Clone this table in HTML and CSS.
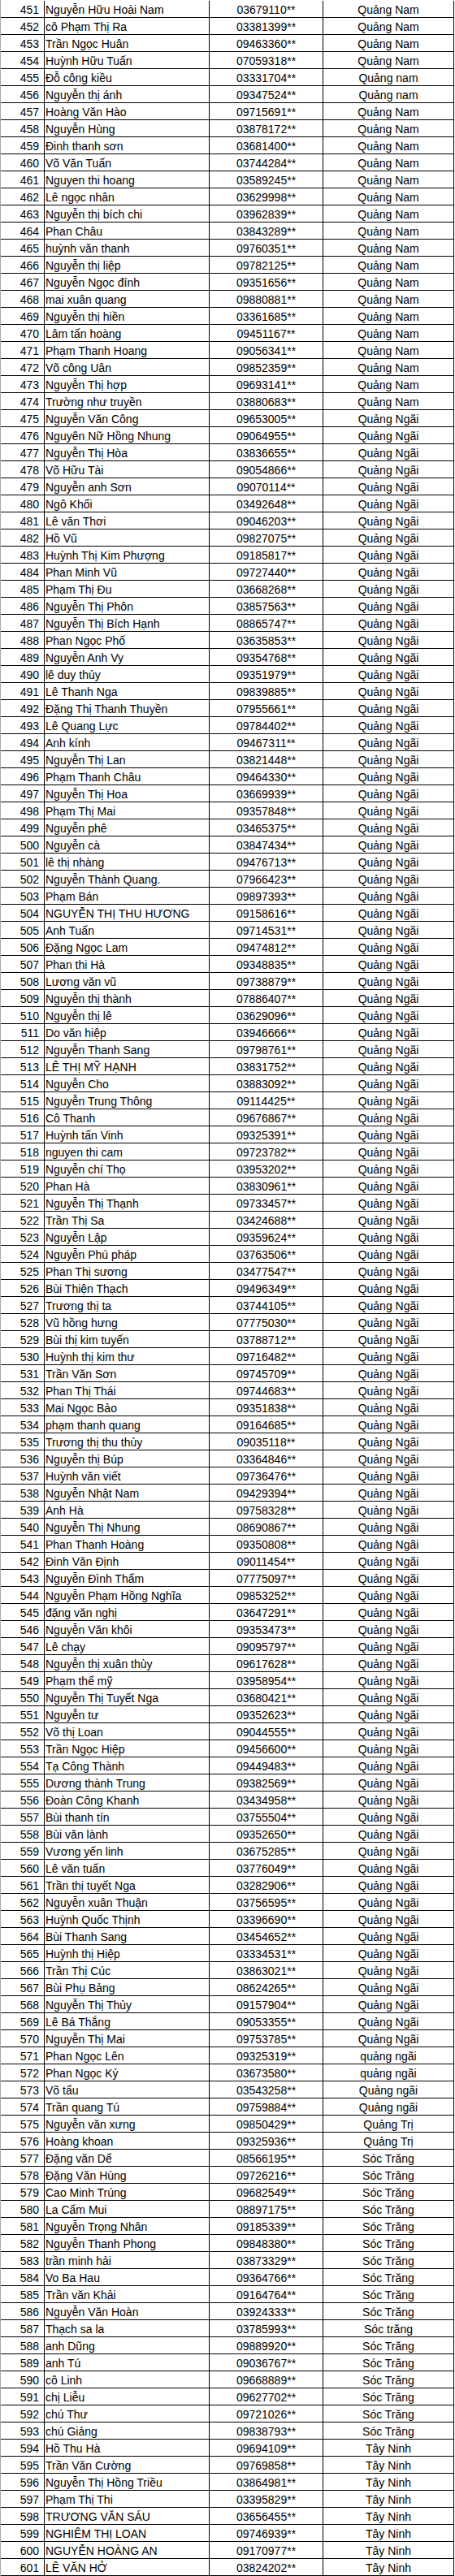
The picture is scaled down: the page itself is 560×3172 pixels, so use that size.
FILE: index.html
```html
<!DOCTYPE html>
<html lang="vi">
<head>
<meta charset="utf-8">
<title>Danh sách</title>
<link rel="stylesheet" href="styles.css">
</head>
<body>
<div class="sheet">
<div class="c n">451</div><div class="c nm">Nguyễn Hữu Hoài Nam</div><div class="c ph">03679110**</div><div class="c pv">Quảng Nam</div>
<div class="c n">452</div><div class="c nm">cô Phạm Thị Ra</div><div class="c ph">03381399**</div><div class="c pv">Quảng Nam</div>
<div class="c n">453</div><div class="c nm">Trần Ngọc Huân</div><div class="c ph">09463360**</div><div class="c pv">Quảng Nam</div>
<div class="c n">454</div><div class="c nm">Huỳnh Hữu Tuấn</div><div class="c ph">07059318**</div><div class="c pv">Quảng Nam</div>
<div class="c n">455</div><div class="c nm">Đỗ công kiều</div><div class="c ph">03331704**</div><div class="c pv">Quảng nam</div>
<div class="c n">456</div><div class="c nm">Nguyễn thị ánh</div><div class="c ph">09347524**</div><div class="c pv">Quảng nam</div>
<div class="c n">457</div><div class="c nm">Hoàng Văn Hào</div><div class="c ph">09715691**</div><div class="c pv">Quảng Nam</div>
<div class="c n">458</div><div class="c nm">Nguyễn Hùng</div><div class="c ph">03878172**</div><div class="c pv">Quảng Nam</div>
<div class="c n">459</div><div class="c nm">Đinh thanh sơn</div><div class="c ph">03681400**</div><div class="c pv">Quảng Nam</div>
<div class="c n">460</div><div class="c nm">Võ Văn Tuấn</div><div class="c ph">03744284**</div><div class="c pv">Quảng Nam</div>
<div class="c n">461</div><div class="c nm">Nguyen thi hoang</div><div class="c ph">03589245**</div><div class="c pv">Quảng Nam</div>
<div class="c n">462</div><div class="c nm">Lê ngọc nhân</div><div class="c ph">03629998**</div><div class="c pv">Quảng Nam</div>
<div class="c n">463</div><div class="c nm">Nguyễn thị bích chi</div><div class="c ph">03962839**</div><div class="c pv">Quảng Nam</div>
<div class="c n">464</div><div class="c nm">Phan Châu</div><div class="c ph">03843289**</div><div class="c pv">Quảng Nam</div>
<div class="c n">465</div><div class="c nm">huỳnh văn thanh</div><div class="c ph">09760351**</div><div class="c pv">Quảng Nam</div>
<div class="c n">466</div><div class="c nm">Nguyễn thị liệp</div><div class="c ph">09782125**</div><div class="c pv">Quảng Nam</div>
<div class="c n">467</div><div class="c nm">Nguyễn Ngọc đính</div><div class="c ph">09351656**</div><div class="c pv">Quảng Nam</div>
<div class="c n">468</div><div class="c nm">mai xuân quang</div><div class="c ph">09880881**</div><div class="c pv">Quảng Nam</div>
<div class="c n">469</div><div class="c nm">Nguyễn thị hiền</div><div class="c ph">03361685**</div><div class="c pv">Quảng Nam</div>
<div class="c n">470</div><div class="c nm">Lâm tấn hoàng</div><div class="c ph">09451167**</div><div class="c pv">Quảng Nam</div>
<div class="c n">471</div><div class="c nm">Phạm Thanh Hoang</div><div class="c ph">09056341**</div><div class="c pv">Quảng Nam</div>
<div class="c n">472</div><div class="c nm">Võ công Uân</div><div class="c ph">09852359**</div><div class="c pv">Quảng Nam</div>
<div class="c n">473</div><div class="c nm">Nguyễn Thị hợp</div><div class="c ph">09693141**</div><div class="c pv">Quảng Nam</div>
<div class="c n">474</div><div class="c nm">Trường như truyền</div><div class="c ph">03880683**</div><div class="c pv">Quảng Nam</div>
<div class="c n">475</div><div class="c nm">Nguyễn Văn Công</div><div class="c ph">09653005**</div><div class="c pv">Quảng Ngãi</div>
<div class="c n">476</div><div class="c nm">Nguyên Nữ Hồng Nhung</div><div class="c ph">09064955**</div><div class="c pv">Quảng Ngãi</div>
<div class="c n">477</div><div class="c nm">Nguyễn Thị Hòa</div><div class="c ph">03836655**</div><div class="c pv">Quảng Ngãi</div>
<div class="c n">478</div><div class="c nm">Võ Hữu Tài</div><div class="c ph">09054866**</div><div class="c pv">Quảng Ngãi</div>
<div class="c n">479</div><div class="c nm">Nguyễn anh Sơn</div><div class="c ph">09070114**</div><div class="c pv">Quảng Ngãi</div>
<div class="c n">480</div><div class="c nm">Ngô Khối</div><div class="c ph">03492648**</div><div class="c pv">Quảng Ngãi</div>
<div class="c n">481</div><div class="c nm">Lê văn Thơi</div><div class="c ph">09046203**</div><div class="c pv">Quảng Ngãi</div>
<div class="c n">482</div><div class="c nm">Hồ Vũ</div><div class="c ph">09827075**</div><div class="c pv">Quảng Ngãi</div>
<div class="c n">483</div><div class="c nm">Huỳnh Thị Kim Phượng</div><div class="c ph">09185817**</div><div class="c pv">Quảng Ngãi</div>
<div class="c n">484</div><div class="c nm">Phan Minh Vũ</div><div class="c ph">09727440**</div><div class="c pv">Quảng Ngãi</div>
<div class="c n">485</div><div class="c nm">Phạm Thị Đu</div><div class="c ph">03668268**</div><div class="c pv">Quảng Ngãi</div>
<div class="c n">486</div><div class="c nm">Nguyễn Thị Phôn</div><div class="c ph">03857563**</div><div class="c pv">Quảng Ngãi</div>
<div class="c n">487</div><div class="c nm">Nguyễn Thị Bích Hạnh</div><div class="c ph">08865747**</div><div class="c pv">Quảng Ngãi</div>
<div class="c n">488</div><div class="c nm">Phan Ngọc Phố</div><div class="c ph">03635853**</div><div class="c pv">Quảng Ngãi</div>
<div class="c n">489</div><div class="c nm">Nguyễn Anh Vy</div><div class="c ph">09354768**</div><div class="c pv">Quảng Ngãi</div>
<div class="c n">490</div><div class="c nm">lê duy thủy</div><div class="c ph">09351979**</div><div class="c pv">Quảng Ngãi</div>
<div class="c n">491</div><div class="c nm">Lê Thanh Nga</div><div class="c ph">09839885**</div><div class="c pv">Quảng Ngãi</div>
<div class="c n">492</div><div class="c nm">Đặng Thị Thanh Thuyền</div><div class="c ph">07955661**</div><div class="c pv">Quảng Ngãi</div>
<div class="c n">493</div><div class="c nm">Lê Quang Lực</div><div class="c ph">09784402**</div><div class="c pv">Quảng Ngãi</div>
<div class="c n">494</div><div class="c nm">Anh kính</div><div class="c ph">09467311**</div><div class="c pv">Quảng Ngãi</div>
<div class="c n">495</div><div class="c nm">Nguyễn Thị Lan</div><div class="c ph">03821448**</div><div class="c pv">Quảng Ngãi</div>
<div class="c n">496</div><div class="c nm">Phạm Thanh Châu</div><div class="c ph">09464330**</div><div class="c pv">Quảng Ngãi</div>
<div class="c n">497</div><div class="c nm">Nguyễn Thị Hoa</div><div class="c ph">03669939**</div><div class="c pv">Quảng Ngãi</div>
<div class="c n">498</div><div class="c nm">Phạm Thị Mai</div><div class="c ph">09357848**</div><div class="c pv">Quảng Ngãi</div>
<div class="c n">499</div><div class="c nm">Nguyễn phê</div><div class="c ph">03465375**</div><div class="c pv">Quảng Ngãi</div>
<div class="c n">500</div><div class="c nm">Nguyễn cà</div><div class="c ph">03847434**</div><div class="c pv">Quảng Ngãi</div>
<div class="c n">501</div><div class="c nm">lê thị nhàng</div><div class="c ph">09476713**</div><div class="c pv">Quảng Ngãi</div>
<div class="c n">502</div><div class="c nm">Nguyễn Thành Quang.</div><div class="c ph">07966423**</div><div class="c pv">Quảng Ngãi</div>
<div class="c n">503</div><div class="c nm">Phạm Bán</div><div class="c ph">09897393**</div><div class="c pv">Quảng Ngãi</div>
<div class="c n">504</div><div class="c nm">NGUYỄN THỊ THU HƯƠNG</div><div class="c ph">09158616**</div><div class="c pv">Quảng Ngãi</div>
<div class="c n">505</div><div class="c nm">Anh Tuấn</div><div class="c ph">09714531**</div><div class="c pv">Quảng Ngãi</div>
<div class="c n">506</div><div class="c nm">Đặng Ngọc Lam</div><div class="c ph">09474812**</div><div class="c pv">Quảng Ngãi</div>
<div class="c n">507</div><div class="c nm">Phan thi Hà</div><div class="c ph">09348835**</div><div class="c pv">Quảng Ngãi</div>
<div class="c n">508</div><div class="c nm">Lương văn vũ</div><div class="c ph">09738879**</div><div class="c pv">Quảng Ngãi</div>
<div class="c n">509</div><div class="c nm">Nguyễn thị thành</div><div class="c ph">07886407**</div><div class="c pv">Quảng Ngãi</div>
<div class="c n">510</div><div class="c nm">Nguyễn thị lê</div><div class="c ph">03629096**</div><div class="c pv">Quảng Ngãi</div>
<div class="c n">511</div><div class="c nm">Do văn hiệp</div><div class="c ph">03946666**</div><div class="c pv">Quảng Ngãi</div>
<div class="c n">512</div><div class="c nm">Nguyễn Thanh Sang</div><div class="c ph">09798761**</div><div class="c pv">Quảng Ngãi</div>
<div class="c n">513</div><div class="c nm">LÊ THỊ MỸ HẠNH</div><div class="c ph">03831752**</div><div class="c pv">Quảng Ngãi</div>
<div class="c n">514</div><div class="c nm">Nguyễn Cho</div><div class="c ph">03883092**</div><div class="c pv">Quảng Ngãi</div>
<div class="c n">515</div><div class="c nm">Nguyễn Trung Thông</div><div class="c ph">09114425**</div><div class="c pv">Quảng Ngãi</div>
<div class="c n">516</div><div class="c nm">Cô Thanh</div><div class="c ph">09676867**</div><div class="c pv">Quảng Ngãi</div>
<div class="c n">517</div><div class="c nm">Huỳnh tấn Vinh</div><div class="c ph">09325391**</div><div class="c pv">Quảng Ngãi</div>
<div class="c n">518</div><div class="c nm">nguyen thi cam</div><div class="c ph">09723782**</div><div class="c pv">Quảng Ngãi</div>
<div class="c n">519</div><div class="c nm">Nguyễn chí Thọ</div><div class="c ph">03953202**</div><div class="c pv">Quảng Ngãi</div>
<div class="c n">520</div><div class="c nm">Phan Hà</div><div class="c ph">03830961**</div><div class="c pv">Quảng Ngãi</div>
<div class="c n">521</div><div class="c nm">Nguyễn Thị Thạnh</div><div class="c ph">09733457**</div><div class="c pv">Quảng Ngãi</div>
<div class="c n">522</div><div class="c nm">Trần Thị Sa</div><div class="c ph">03424688**</div><div class="c pv">Quảng Ngãi</div>
<div class="c n">523</div><div class="c nm">Nguyễn Lập</div><div class="c ph">09359624**</div><div class="c pv">Quảng Ngãi</div>
<div class="c n">524</div><div class="c nm">Nguyễn Phú pháp</div><div class="c ph">03763506**</div><div class="c pv">Quảng Ngãi</div>
<div class="c n">525</div><div class="c nm">Phan Thị sương</div><div class="c ph">03477547**</div><div class="c pv">Quảng Ngãi</div>
<div class="c n">526</div><div class="c nm">Bùi Thiện Thạch</div><div class="c ph">09496349**</div><div class="c pv">Quảng Ngãi</div>
<div class="c n">527</div><div class="c nm">Trương thị ta</div><div class="c ph">03744105**</div><div class="c pv">Quảng Ngãi</div>
<div class="c n">528</div><div class="c nm">Vũ hồng hưng</div><div class="c ph">07775030**</div><div class="c pv">Quảng Ngãi</div>
<div class="c n">529</div><div class="c nm">Bùi thị kim tuyến</div><div class="c ph">03788712**</div><div class="c pv">Quảng Ngãi</div>
<div class="c n">530</div><div class="c nm">Huỳnh thị kim thư</div><div class="c ph">09716482**</div><div class="c pv">Quảng Ngãi</div>
<div class="c n">531</div><div class="c nm">Trần Văn Sơn</div><div class="c ph">09745709**</div><div class="c pv">Quảng Ngãi</div>
<div class="c n">532</div><div class="c nm">Phan Thị Thái</div><div class="c ph">09744683**</div><div class="c pv">Quảng Ngãi</div>
<div class="c n">533</div><div class="c nm">Mai Ngọc Bảo</div><div class="c ph">09351838**</div><div class="c pv">Quảng Ngãi</div>
<div class="c n">534</div><div class="c nm">phạm thanh quang</div><div class="c ph">09164685**</div><div class="c pv">Quảng Ngãi</div>
<div class="c n">535</div><div class="c nm">Trương thị thu thủy</div><div class="c ph">09035118**</div><div class="c pv">Quảng Ngãi</div>
<div class="c n">536</div><div class="c nm">Nguyễn thị Búp</div><div class="c ph">03364846**</div><div class="c pv">Quảng Ngãi</div>
<div class="c n">537</div><div class="c nm">Huỳnh văn viết</div><div class="c ph">09736476**</div><div class="c pv">Quảng Ngãi</div>
<div class="c n">538</div><div class="c nm">Nguyễn Nhật Nam</div><div class="c ph">09429394**</div><div class="c pv">Quảng Ngãi</div>
<div class="c n">539</div><div class="c nm">Anh Hà</div><div class="c ph">09758328**</div><div class="c pv">Quảng Ngãi</div>
<div class="c n">540</div><div class="c nm">Nguyễn Thị Nhung</div><div class="c ph">08690867**</div><div class="c pv">Quảng Ngãi</div>
<div class="c n">541</div><div class="c nm">Phan Thanh Hoàng</div><div class="c ph">09350808**</div><div class="c pv">Quảng Ngãi</div>
<div class="c n">542</div><div class="c nm">Đinh Văn Định</div><div class="c ph">09011454**</div><div class="c pv">Quảng Ngãi</div>
<div class="c n">543</div><div class="c nm">Nguyễn Đình Thẩm</div><div class="c ph">07775097**</div><div class="c pv">Quảng Ngãi</div>
<div class="c n">544</div><div class="c nm">Nguyễn Phạm Hồng Nghĩa</div><div class="c ph">09853252**</div><div class="c pv">Quảng Ngãi</div>
<div class="c n">545</div><div class="c nm">đặng văn nghị</div><div class="c ph">03647291**</div><div class="c pv">Quảng Ngãi</div>
<div class="c n">546</div><div class="c nm">Nguyễn Văn khôi</div><div class="c ph">09353473**</div><div class="c pv">Quảng Ngãi</div>
<div class="c n">547</div><div class="c nm">Lê chạy</div><div class="c ph">09095797**</div><div class="c pv">Quảng Ngãi</div>
<div class="c n">548</div><div class="c nm">Nguyễn thị xuân thùy</div><div class="c ph">09617628**</div><div class="c pv">Quảng Ngãi</div>
<div class="c n">549</div><div class="c nm">Phạm thế mỹ</div><div class="c ph">03958954**</div><div class="c pv">Quảng Ngãi</div>
<div class="c n">550</div><div class="c nm">Nguyễn Thị Tuyết Nga</div><div class="c ph">03680421**</div><div class="c pv">Quảng Ngãi</div>
<div class="c n">551</div><div class="c nm">Nguyễn tư</div><div class="c ph">09352623**</div><div class="c pv">Quảng Ngãi</div>
<div class="c n">552</div><div class="c nm">Võ thị Loan</div><div class="c ph">09044555**</div><div class="c pv">Quảng Ngãi</div>
<div class="c n">553</div><div class="c nm">Trần Ngọc Hiệp</div><div class="c ph">09456600**</div><div class="c pv">Quảng Ngãi</div>
<div class="c n">554</div><div class="c nm">Tạ Công Thành</div><div class="c ph">09449483**</div><div class="c pv">Quảng Ngãi</div>
<div class="c n">555</div><div class="c nm">Dương thành Trung</div><div class="c ph">09382569**</div><div class="c pv">Quảng Ngãi</div>
<div class="c n">556</div><div class="c nm">Đoàn Công Khanh</div><div class="c ph">03434958**</div><div class="c pv">Quảng Ngãi</div>
<div class="c n">557</div><div class="c nm">Bùi thanh tín</div><div class="c ph">03755504**</div><div class="c pv">Quảng Ngãi</div>
<div class="c n">558</div><div class="c nm">Bùi văn lành</div><div class="c ph">09352650**</div><div class="c pv">Quảng Ngãi</div>
<div class="c n">559</div><div class="c nm">Vương yến linh</div><div class="c ph">03675285**</div><div class="c pv">Quảng Ngãi</div>
<div class="c n">560</div><div class="c nm">Lê văn tuấn</div><div class="c ph">03776049**</div><div class="c pv">Quảng Ngãi</div>
<div class="c n">561</div><div class="c nm">Trần thị tuyết Nga</div><div class="c ph">03282906**</div><div class="c pv">Quảng Ngãi</div>
<div class="c n">562</div><div class="c nm">Nguyễn xuân Thuận</div><div class="c ph">03756595**</div><div class="c pv">Quảng Ngãi</div>
<div class="c n">563</div><div class="c nm">Huỳnh Quốc Thịnh</div><div class="c ph">03396690**</div><div class="c pv">Quảng Ngãi</div>
<div class="c n">564</div><div class="c nm">Bùi Thanh Sang</div><div class="c ph">03454652**</div><div class="c pv">Quảng Ngãi</div>
<div class="c n">565</div><div class="c nm">Huỳnh thị Hiệp</div><div class="c ph">03334531**</div><div class="c pv">Quảng Ngãi</div>
<div class="c n">566</div><div class="c nm">Trần Thị Cúc</div><div class="c ph">03863021**</div><div class="c pv">Quảng Ngãi</div>
<div class="c n">567</div><div class="c nm">Bùi Phụ Bảng</div><div class="c ph">08624265**</div><div class="c pv">Quảng Ngãi</div>
<div class="c n">568</div><div class="c nm">Nguyễn Thị Thủy</div><div class="c ph">09157904**</div><div class="c pv">Quảng Ngãi</div>
<div class="c n">569</div><div class="c nm">Lê Bá Thắng</div><div class="c ph">09053355**</div><div class="c pv">Quảng Ngãi</div>
<div class="c n">570</div><div class="c nm">Nguyễn Thị Mai</div><div class="c ph">09753785**</div><div class="c pv">Quảng Ngãi</div>
<div class="c n">571</div><div class="c nm">Phan Ngọc Lên</div><div class="c ph">09325319**</div><div class="c pv">quảng ngãi</div>
<div class="c n">572</div><div class="c nm">Phan Ngọc Ký</div><div class="c ph">03673580**</div><div class="c pv">quảng ngãi</div>
<div class="c n">573</div><div class="c nm">Võ tẩu</div><div class="c ph">03543258**</div><div class="c pv">Quảng ngãi</div>
<div class="c n">574</div><div class="c nm">Trần quang Tú</div><div class="c ph">09759884**</div><div class="c pv">Quảng ngãi</div>
<div class="c n">575</div><div class="c nm">Nguyễn văn xưng</div><div class="c ph">09850429**</div><div class="c pv">Quảng Trị</div>
<div class="c n">576</div><div class="c nm">Hoàng khoan</div><div class="c ph">09325936**</div><div class="c pv">Quảng Trị</div>
<div class="c n">577</div><div class="c nm">Đặng văn Dể</div><div class="c ph">08566195**</div><div class="c pv">Sóc Trăng</div>
<div class="c n">578</div><div class="c nm">Đặng Văn Hùng</div><div class="c ph">09726216**</div><div class="c pv">Sóc Trăng</div>
<div class="c n">579</div><div class="c nm">Cao Minh Trúng</div><div class="c ph">09682549**</div><div class="c pv">Sóc Trăng</div>
<div class="c n">580</div><div class="c nm">La Cẩm Mui</div><div class="c ph">08897175**</div><div class="c pv">Sóc Trăng</div>
<div class="c n">581</div><div class="c nm">Nguyễn Trọng Nhân</div><div class="c ph">09185339**</div><div class="c pv">Sóc Trăng</div>
<div class="c n">582</div><div class="c nm">Nguyễn Thanh Phong</div><div class="c ph">09848380**</div><div class="c pv">Sóc Trăng</div>
<div class="c n">583</div><div class="c nm">trần minh hải</div><div class="c ph">03873329**</div><div class="c pv">Sóc Trăng</div>
<div class="c n">584</div><div class="c nm">Vo Ba Hau</div><div class="c ph">09364766**</div><div class="c pv">Sóc Trăng</div>
<div class="c n">585</div><div class="c nm">Trần văn Khải</div><div class="c ph">09164764**</div><div class="c pv">Sóc Trăng</div>
<div class="c n">586</div><div class="c nm">Nguyễn Văn Hoàn</div><div class="c ph">03924333**</div><div class="c pv">Sóc Trăng</div>
<div class="c n">587</div><div class="c nm">Thạch sa la</div><div class="c ph">03785993**</div><div class="c pv">Sóc trăng</div>
<div class="c n">588</div><div class="c nm">anh Dũng</div><div class="c ph">09889920**</div><div class="c pv">Sóc Trăng</div>
<div class="c n">589</div><div class="c nm">anh Tú</div><div class="c ph">09036767**</div><div class="c pv">Sóc Trăng</div>
<div class="c n">590</div><div class="c nm">cô Linh</div><div class="c ph">09668889**</div><div class="c pv">Sóc Trăng</div>
<div class="c n">591</div><div class="c nm">chị Liễu</div><div class="c ph">09627702**</div><div class="c pv">Sóc Trăng</div>
<div class="c n">592</div><div class="c nm">chú Thư</div><div class="c ph">09721026**</div><div class="c pv">Sóc Trăng</div>
<div class="c n">593</div><div class="c nm">chú Giảng</div><div class="c ph">09838793**</div><div class="c pv">Sóc Trăng</div>
<div class="c n">594</div><div class="c nm">Hồ Thu Hà</div><div class="c ph">09694109**</div><div class="c pv">Tây Ninh</div>
<div class="c n">595</div><div class="c nm">Trần Văn Cường</div><div class="c ph">09769858**</div><div class="c pv">Tây Ninh</div>
<div class="c n">596</div><div class="c nm">Nguyễn Thị Hồng Triều</div><div class="c ph">03864981**</div><div class="c pv">Tây Ninh</div>
<div class="c n">597</div><div class="c nm">Phạm Thị Thi</div><div class="c ph">03395829**</div><div class="c pv">Tây Ninh</div>
<div class="c n">598</div><div class="c nm">TRƯƠNG VĂN SÁU</div><div class="c ph">03656455**</div><div class="c pv">Tây Ninh</div>
<div class="c n">599</div><div class="c nm">NGHIÊM THỊ LOAN</div><div class="c ph">09746939**</div><div class="c pv">Tây Ninh</div>
<div class="c n">600</div><div class="c nm">NGUYỄN HOÀNG AN</div><div class="c ph">09170977**</div><div class="c pv">Tây Ninh</div>
<div class="c n">601</div><div class="c nm">LÊ VĂN HỞ</div><div class="c ph">03824202**</div><div class="c pv">Tây Ninh</div>
</div>
</body>
</html>
```

FILE: styles.css
```css
html, body {
  margin: 0;
  padding: 0;
  background: #ffffff;
}

body {
  font-family: "Liberation Sans", Arial, sans-serif;
  font-size: 14px;
  color: #000000;
}

.sheet {
  display: grid;
  grid-template-columns: 54px 203px 140px 161px;
  grid-auto-rows: 21px;
  width: 559px;
  padding-top: 1px;
  border-left: 1px solid #a8a8a8;
  box-sizing: border-box;
  width: 560px;
}

.c {
  box-sizing: border-box;
  height: 21px;
  padding-top: 3px;
  line-height: 17px;
  border-right: 1px solid #000000;
  border-bottom: 1px solid #000000;
  white-space: nowrap;
  overflow: hidden;
}

.n {
  text-align: right;
  padding-right: 6px;
}

.nm {
  text-align: left;
  padding-left: 1px;
}

.ph {
  text-align: center;
}

.pv {
  text-align: center;
}
```
